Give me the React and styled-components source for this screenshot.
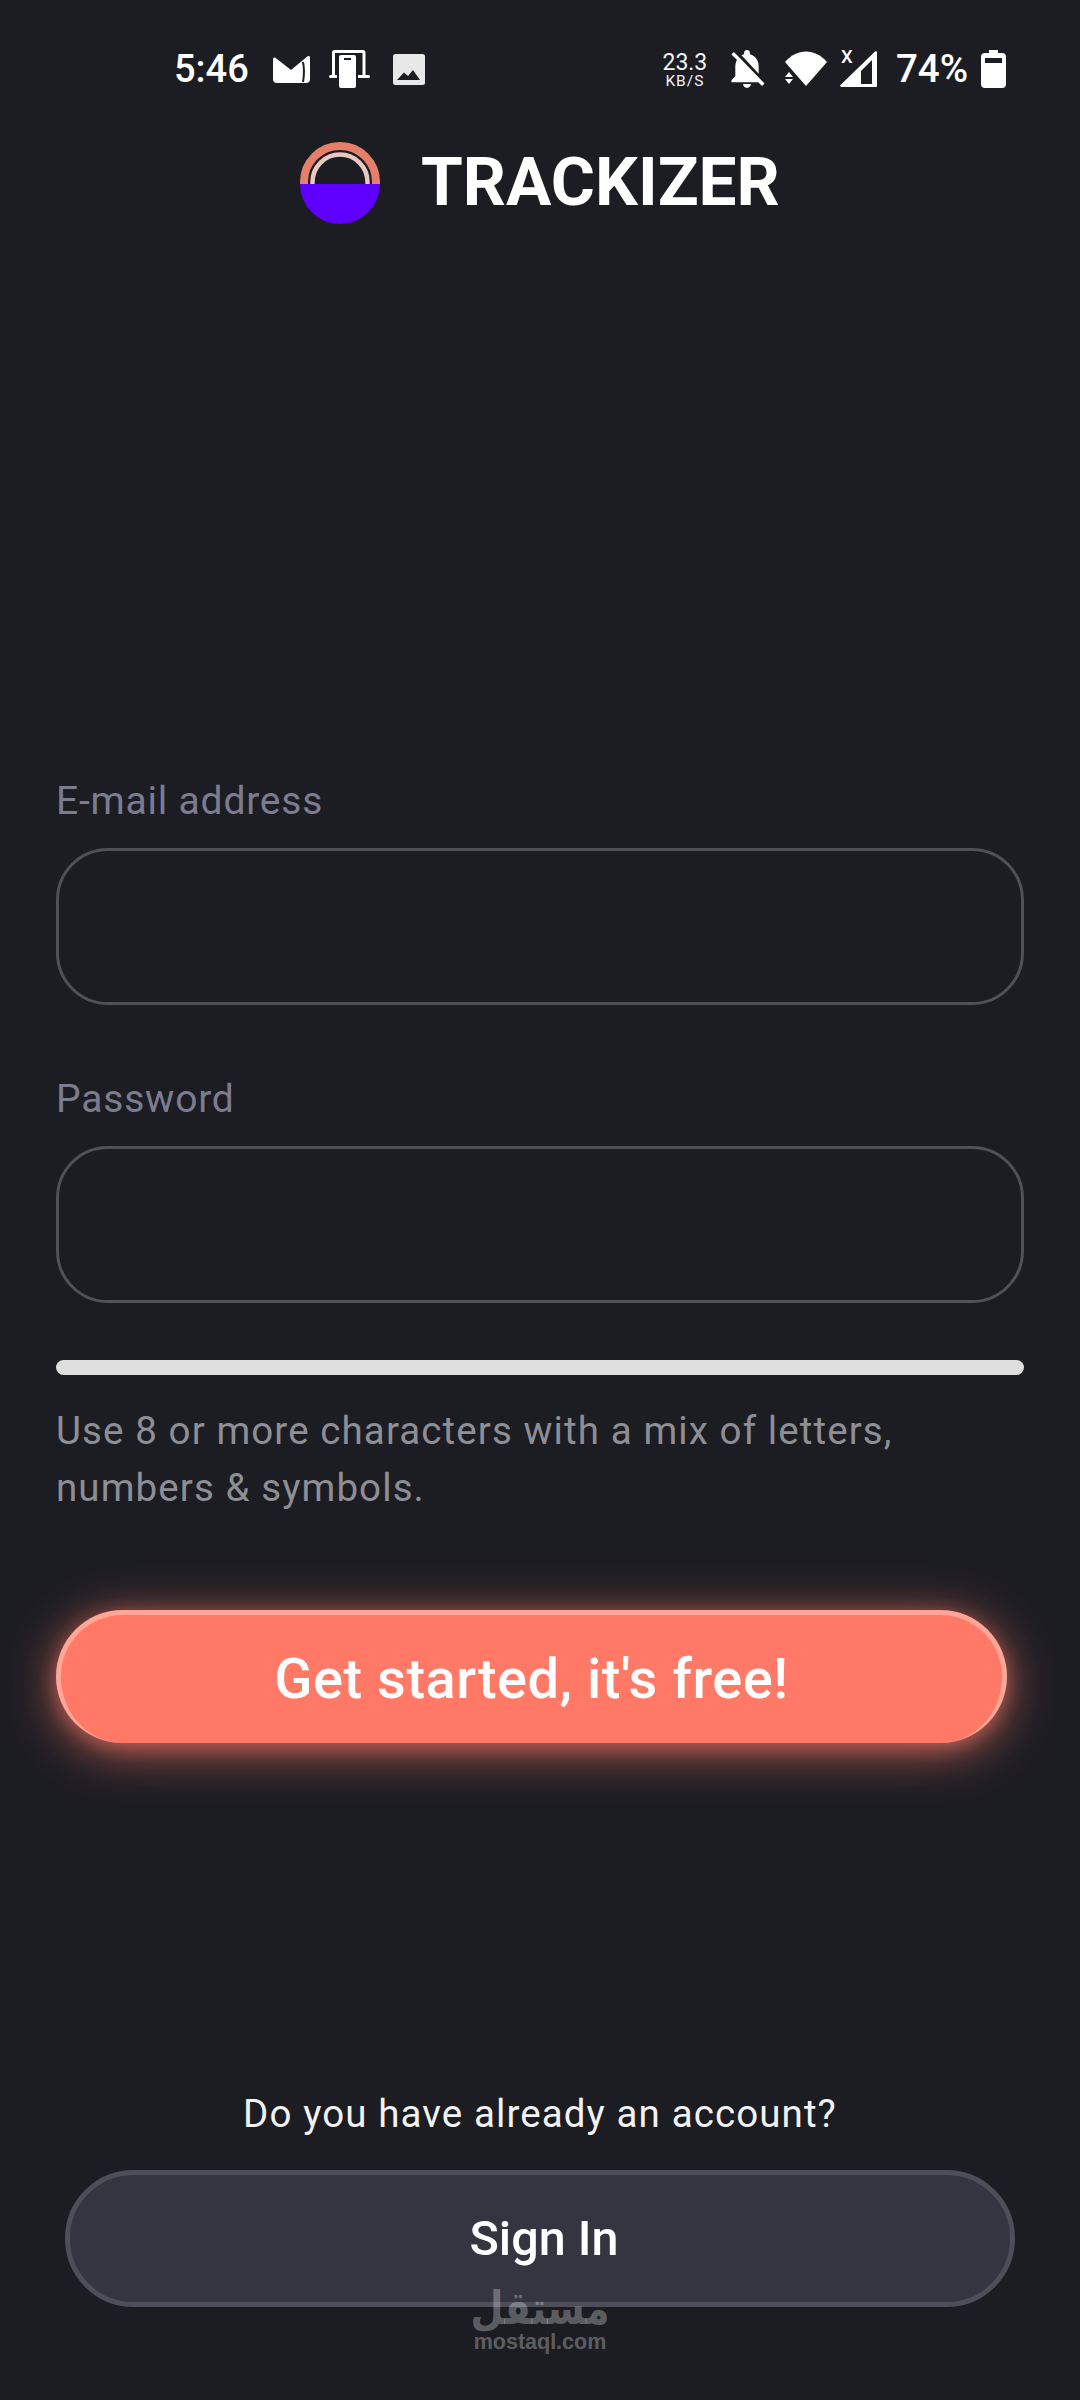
import React from 'react';
import styled, { createGlobalStyle } from 'styled-components';

const GlobalStyle = createGlobalStyle`
  html, body {
    margin: 0;
    padding: 0;
    background: #1c1d23;
  }
  * {
    box-sizing: border-box;
  }
`;

const Page = styled.div`
  position: relative;
  width: 1080px;
  height: 2400px;
  overflow: hidden;
  background: #1c1d23;
  color: #fff;
  font-family: Roboto, "Liberation Sans", sans-serif;
`;

const StatusBar = styled.div`
  display: flex;
  align-items: center;
  justify-content: space-between;
  height: 40px;
  margin-top: 49px;
  padding: 0 74px 0 174px;
`;

const StatusGroup = styled.div`
  display: flex;
  align-items: center;
`;

const StatusSlot = styled.div`
  position: relative;
  display: flex;
  align-items: center;
  margin-left: ${props => props.$left || 0}px;
`;

const StatusText = styled.span`
  font-size: ${props => props.$size || 38}px;
  font-weight: 500;
  line-height: 40px;
  color: #fff;
`;

const Speed = styled.div`
  display: flex;
  flex-direction: column;
  align-items: center;
  width: 46px;
  font-weight: 400;
  color: #f2f2f2;
`;

const SpeedValue = styled.span`
  font-size: 23px;
  line-height: 23px;
`;

const SpeedUnit = styled.span`
  font-size: 15.5px;
  line-height: 14px;
  letter-spacing: 1px;
`;

const SignalX = styled.span`
  position: absolute;
  left: 1px;
  top: -2px;
  font-size: 18.5px;
  font-weight: 500;
  line-height: 16px;
  color: #fff;
`;

const Brand = styled.div`
  display: flex;
  align-items: center;
  justify-content: flex-start;
  gap: 41px;
  margin-top: 52px;
  padding-left: 300px;
  height: 84px;
`;

const BrandName = styled.h1`
  margin: -2px 0 0;
  font-size: 67.5px;
  font-weight: 700;
  line-height: 84px;
  color: #fff;
`;

const Form = styled.form`
  display: flex;
  flex-direction: column;
  margin-top: 552px;
  padding: 0 56px 0 56px;
`;

const Label = styled.label`
  display: block;
  height: 48px;
  font-size: 39px;
  line-height: 48px;
  letter-spacing: 0.8px;
  color: #7c7c91;
`;

const Field = styled.div`
  height: 157px;
  margin: 23px 0 ${props => props.$after}px;
  border: 3px solid #505157;
  border-radius: 52px;
`;

const StrengthBar = styled.div`
  height: 15px;
  border-radius: 8px;
  background: #dfdfdf;
`;

const Hint = styled.p`
  margin: 27px 0 0;
  width: 900px;
  font-size: 38.5px;
  line-height: 57px;
  letter-spacing: 1.1px;
  color: #8e8e95;
`;

const PrimaryButton = styled.button`
  display: block;
  width: 951px;
  height: 133px;
  margin-top: 94px;
  padding: 0;
  border: 5px solid #ffa699;
  border-bottom: 0;
  border-radius: 67px;
  background: #ff7966;
  box-shadow: 0 8px 50px rgba(255, 121, 102, 0.7), 0 4px 18px rgba(255, 121, 102, 0.4);
  color: #fff;
  font-family: inherit;
  font-size: 56px;
  font-weight: 500;
  letter-spacing: 0.5px;
`;

const Footer = styled.div`
  display: flex;
  flex-direction: column;
  align-items: center;
  margin-top: 342px;
`;

const FooterText = styled.p`
  margin: 0;
  height: 58px;
  font-size: 38.5px;
  line-height: 58px;
  letter-spacing: 1.1px;
  color: #f2f2f2;
`;

const SecondaryButton = styled.button`
  display: block;
  width: 950px;
  height: 137px;
  margin-top: 27px;
  padding: 0 0 0 8px;
  border: 5px solid #4e4e5a;
  border-radius: 69px;
  background: #353541;
  color: #fff;
  font-family: inherit;
  font-size: 48.5px;
  font-weight: 500;
`;

// sits over the sign in button, the site stamp of the screenshot
const Watermark = styled.div`
  position: absolute;
  left: 474px;
  top: 2286px;
  width: 132px;
  display: flex;
  flex-direction: column;
  align-items: center;
  color: rgba(255, 255, 255, 0.3);
  font-family: "Liberation Sans", sans-serif;
  font-weight: 700;
  pointer-events: none;
`;

const WatermarkArabic = styled.span`
  font-family: "DejaVu Sans", sans-serif;
  font-size: 38px;
  line-height: 44px;
  transform: scaleY(1.2);
`;

const WatermarkLatin = styled.span`
  font-size: 21.5px;
  line-height: 24px;
`;

const MailIcon = () => (
  <svg width="37" height="28" viewBox="0 0 37 28">
    <path fill="#fff" d="M0 4 a1.5 1.5 0 0 1 2.4-1.2 L18 15 L34.6 1.2 A1.5 1.5 0 0 1 37 2.4 V24 a4 4 0 0 1-4 4 H4 a4 4 0 0 1-4-4Z" />
    <path fill="none" stroke="#1c1d23" strokeWidth="2" d="M30 7 C31.5 14 31 21 30 27" />
  </svg>
);

const DeviceIcon = () => (
  <svg width="41" height="38" viewBox="0 0 41 38">
    <path fill="none" stroke="#fff" strokeWidth="3" d="M4.5 25 V2.5 a1 1 0 0 1 1-1 H34 a1 1 0 0 1 1 1 V25" />
    <rect x="0" y="25" width="41" height="3" rx="1.5" fill="#fff" />
    <rect x="8" y="3" width="21" height="35" rx="2" fill="#1c1d23" />
    <rect x="10" y="5" width="17" height="33" rx="2" fill="#fff" />
    <rect x="15" y="8" width="7" height="2" fill="#1c1d23" />
  </svg>
);

const ImageIcon = () => (
  <svg width="32" height="31" viewBox="0 0 32 31">
    <rect width="32" height="31" rx="2.5" fill="#e8e8e8" />
    <path fill="#1c1d23" d="M4 26 L11 18.5 L15 22 L20 16 L27 26Z" />
  </svg>
);

const BellOffIcon = () => (
  <svg width="36" height="38" viewBox="3 2.5 18 19.5">
    <path fill="#fff" d="M20 18.69L7.84 6.14 5.27 3.49 4 4.76l2.8 2.8v.01c-.52.99-.8 2.16-.8 3.42v5l-2 2v1h13.73l2 2L21 19.72l-1-1.03zM12 22c1.11 0 2-.89 2-2h-4c0 1.11.89 2 2 2zm6-7.32V11c0-3.08-1.64-5.64-4.5-6.32V4c0-.83-.67-1.5-1.5-1.5s-1.5.67-1.5 1.5v.68c-.15.03-.29.08-.42.12-.1.03-.2.07-.3.11h-.01c-.2.08-.4.17-.59.27-.01 0-.01 0-.02.01L18 14.68z" />
  </svg>
);

const WifiIcon = () => (
  <svg width="42" height="36" viewBox="0 0 42 36">
    <path fill="#fff" d="M0 11 C12 -3 30 -3 42 11 L21 35 L7 19 Z" />
    <path fill="#fff" d="M4 21 L8 26 H0Z M0 28 H8 L4 33Z" />
  </svg>
);

const SignalIcon = () => (
  <svg width="37" height="36" viewBox="0 0 37 36">
    <path fill="#fff" fillRule="evenodd" d="M35 0.5 A1.2 1.2 0 0 1 37 1.5 V35 a1 1 0 0 1-1 1 H1 L0 34.5Z M32 9 L21 20 V33 H32Z" />
  </svg>
);

const BatteryIcon = () => (
  <svg width="25" height="38" viewBox="0 0 25 38">
    <path fill="#fff" fillRule="evenodd" d="M8 0 H17 V3 H21 a4 4 0 0 1 4 4 V34 a4 4 0 0 1-4 4 H4 a4 4 0 0 1-4-4 V7 a4 4 0 0 1 4-4 H8Z M4 8 V13 H21 V8Z" />
  </svg>
);

const LogoIcon = () => (
  <svg width="80" height="82" viewBox="0 0 80 82">
    <path fill="none" stroke="#e57f6a" strokeWidth="8" d="M4 42 V40 A36 36 0 0 1 76 40 V42" />
    <path fill="none" stroke="#e8c8c0" strokeWidth="4.5" d="M12.5 42 V40 A27.5 27.5 0 0 1 67.5 40 V42" />
    <path fill="#5f00ff" d="M0 42 H80 A40 40 0 0 1 0 42Z" />
  </svg>
);

const App = () => {
  return (
    <Page>
      <GlobalStyle />
      <StatusBar>
        <StatusGroup>
          <StatusText>5:46</StatusText>
          <StatusSlot $left={24}><MailIcon /></StatusSlot>
          <StatusSlot $left={19}><DeviceIcon /></StatusSlot>
          <StatusSlot $left={23}><ImageIcon /></StatusSlot>
        </StatusGroup>
        <StatusGroup>
          <Speed>
            <SpeedValue>23.3</SpeedValue>
            <SpeedUnit>KB/S</SpeedUnit>
          </Speed>
          <StatusSlot $left={21}><BellOffIcon /></StatusSlot>
          <StatusSlot $left={20}><WifiIcon /></StatusSlot>
          <StatusSlot $left={13}>
            <SignalIcon />
            <SignalX>X</SignalX>
          </StatusSlot>
          <StatusSlot $left={19}><StatusText $size={38.5}>74%</StatusText></StatusSlot>
          <StatusSlot $left={13}><BatteryIcon /></StatusSlot>
        </StatusGroup>
      </StatusBar>
      <Brand>
        <LogoIcon />
        <BrandName>TRACKIZER</BrandName>
      </Brand>
      <Form>
        <Label>E-mail address</Label>
        <Field $after={70} />
        <Label>Password</Label>
        <Field $after={57} />
        <StrengthBar />
        <Hint>Use 8 or more characters with a mix of letters, numbers &amp; symbols.</Hint>
        <PrimaryButton type="button">Get started, it's free!</PrimaryButton>
      </Form>
      <Footer>
        <FooterText>Do you have already an account?</FooterText>
        <SecondaryButton type="button">Sign In</SecondaryButton>
      </Footer>
      <Watermark>
        <WatermarkArabic>مستقل</WatermarkArabic>
        <WatermarkLatin>mostaql.com</WatermarkLatin>
      </Watermark>
    </Page>
  );
};

export default App;
